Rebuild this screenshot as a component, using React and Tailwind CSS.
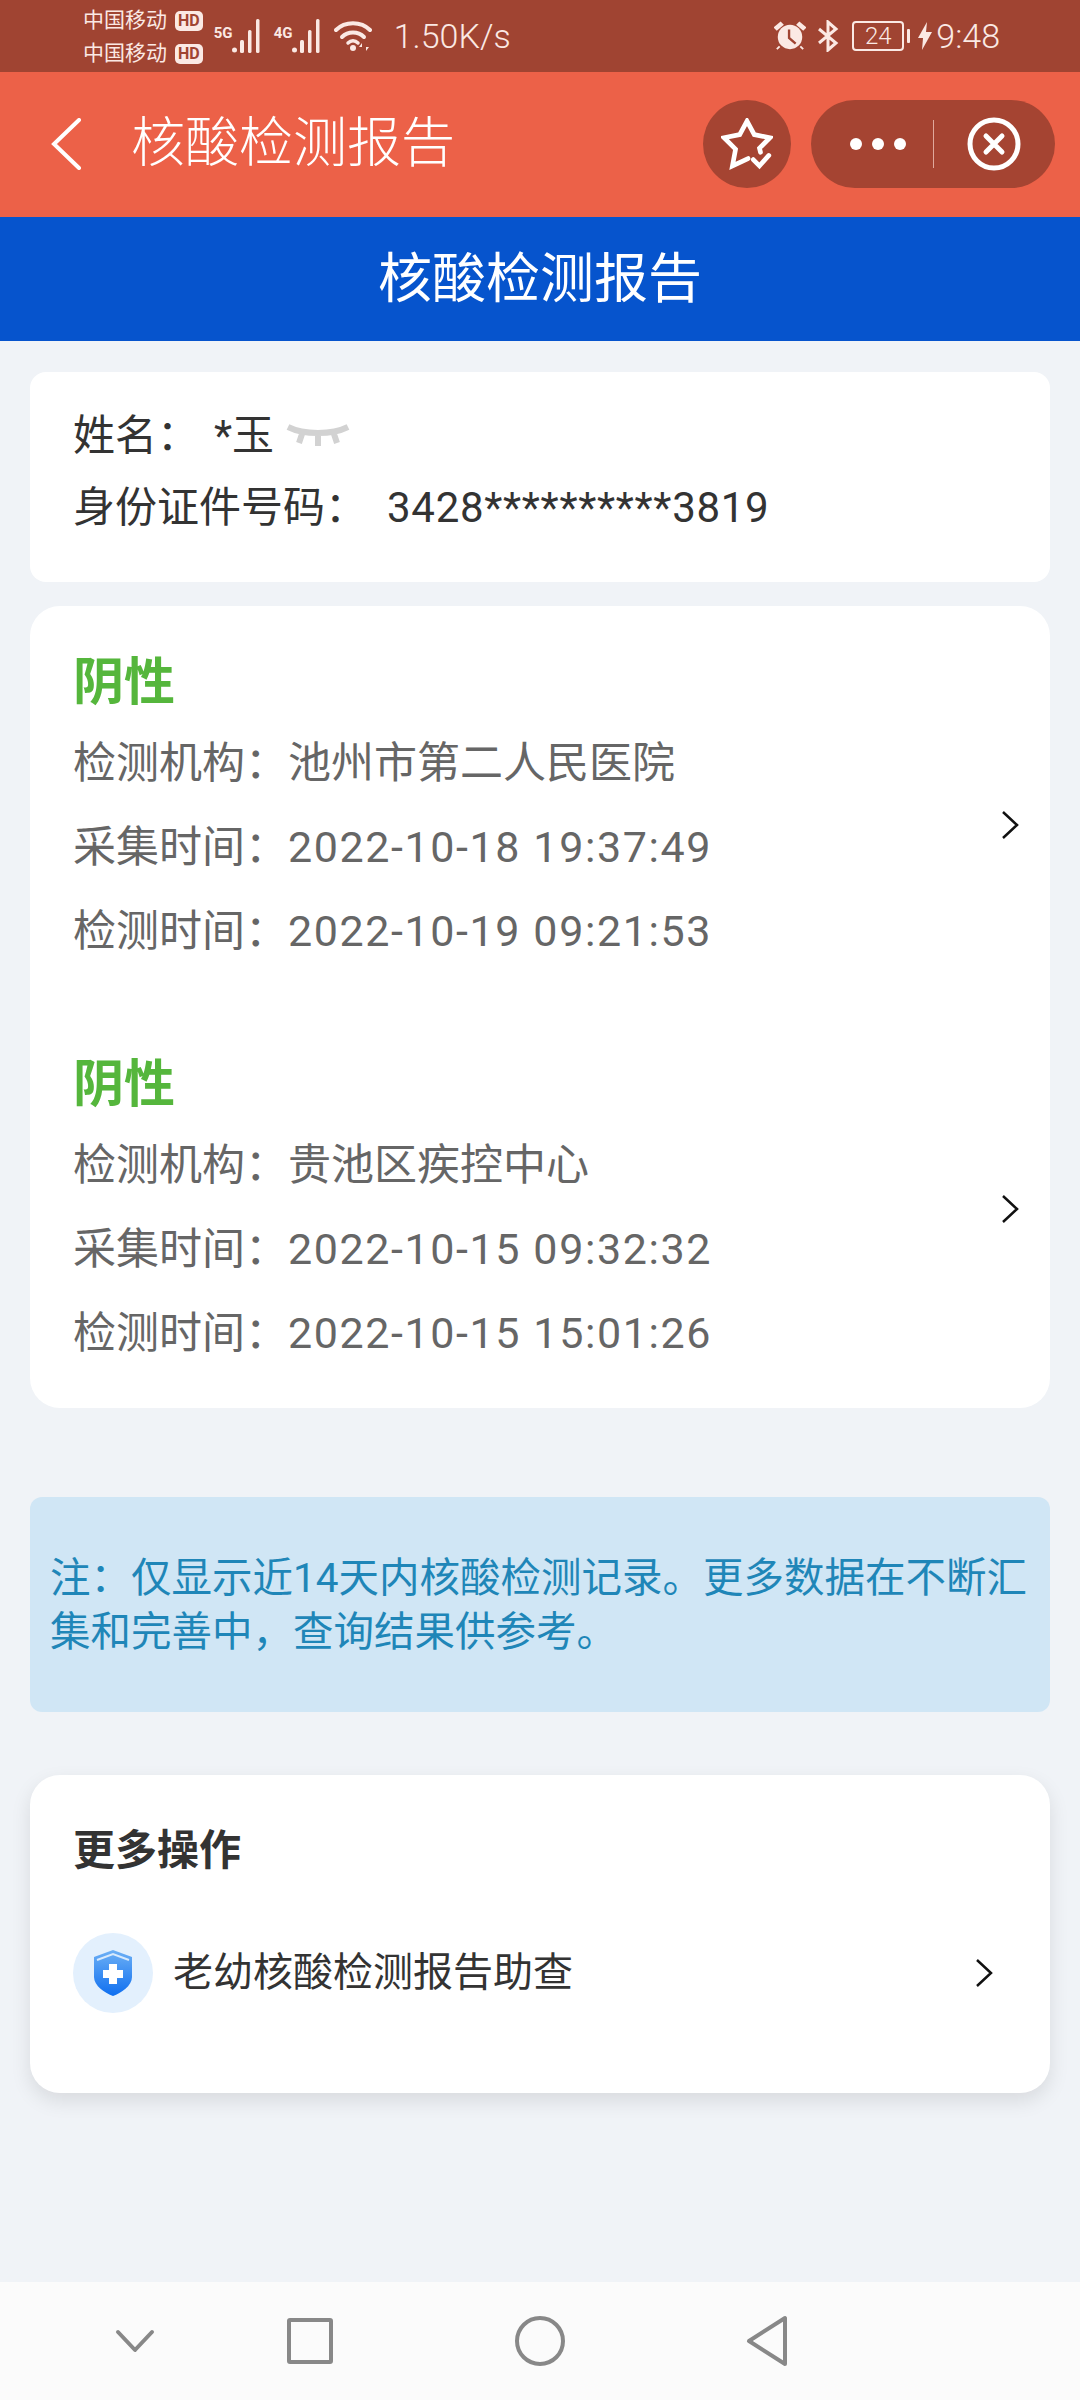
const font = { fontFamily: '"Roboto", "Noto Sans CJK SC", sans-serif' };

// full-width punctuation used in the labels
const COLON = "\uFF1A";
const COMMA = "\uFF0C";
const NOTE = `注${COLON}仅显示近14天内核酸检测记录。更多数据在不断汇集和完善中${COMMA}查询结果供参考。`;

function Signal({ label }) {
  return (
    <div className="flex items-end">
      <span className="mb-[12px] w-[18px] text-[15px] font-bold leading-none text-[#fbe9e4]">{label}</span>
      <svg width="32" height="34" viewBox="0 0 32 34" fill="#fbe9e4">
        <circle cx="2.5" cy="31" r="2.5" />
        <rect x="8" y="21" width="4" height="13" rx="1.5" />
        <rect x="16" y="11" width="3.5" height="23" rx="1.5" />
        <rect x="24" y="0" width="3.5" height="34" rx="1.5" />
      </svg>
    </div>
  );
}

function Hd() {
  return (
    <span className="ml-[8px] rounded-[5px] bg-[#fbe9e4] px-[3px] text-[16px] font-bold leading-[20px] text-[#a04432]">HD</span>
  );
}

function StatusBar() {
  return (
    <div className="flex h-[72px] shrink-0 items-center justify-between bg-[#a04432] pl-[83px] pr-[80px] text-[#fbe9e4]">
      <div className="flex items-center">
        <div className="flex flex-col pt-[2px] text-[21px] leading-[33px]">
          <div className="flex items-center">中国移动<Hd /></div>
          <div className="flex items-center">中国移动<Hd /></div>
        </div>
        <div className="ml-[11px] flex items-center gap-[10px]">
          <Signal label="5G" />
          <Signal label="4G" />
          <svg width="38" height="34" viewBox="0 0 38 34" fill="none" stroke="#fbe9e4" strokeLinecap="round">
            <path d="M2 11C11 2 27 2 36 11" strokeWidth="4" />
            <path d="M8 18C14 12 24 12 30 18" strokeWidth="4" />
            <path d="M14 24C17 21 21 21 24 24" strokeWidth="3.5" />
            <circle cx="19" cy="29" r="3" fill="#fbe9e4" stroke="none" />
            <path d="M28 24l-3 4h3zM32 32l3-4h-3z" fill="#fbe9e4" stroke="none" />
          </svg>
        </div>
        <span className="ml-[22px] text-[34px] font-light leading-none">1.50K/s</span>
      </div>
      <div className="flex items-center">
        <svg width="32" height="32" viewBox="0 0 34 32" fill="#fbe9e4">
          <circle cx="17" cy="17" r="13" />
          <path d="M1 7l6-5 2 2-6 5zM33 7l-6-5-2 2 6 5zM6 27l-3 3M28 27l3 3" stroke="#fbe9e4" strokeWidth="2" />
          <path d="M16 9v9l7 6" stroke="#a04432" strokeWidth="2.5" fill="none" />
        </svg>
        <svg className="ml-[11px]" width="22" height="32" viewBox="0 0 22 32" fill="none" stroke="#fbe9e4" strokeWidth="3">
          <path d="M2 9l17 14-8 7V2l8 7L2 23" />
        </svg>
        <div className="ml-[13px] flex h-[30px] w-[52px] items-center justify-center rounded-[4px] border-2 border-[#fbe9e4] text-[24px] font-light leading-none">24</div>
        <div className="ml-[3px] h-[14px] w-[3px] rounded-[1px] bg-[#fbe9e4]" />
        <svg className="ml-[8px]" width="14" height="28" viewBox="0 0 14 28" fill="#fbe9e4">
          <path d="M9 0L0 16h5l-1 12 10-18H8z" />
        </svg>
        <span className="ml-[4px] text-[34px] font-light leading-none">9:48</span>
      </div>
    </div>
  );
}

function Header() {
  return (
    <div className="flex h-[145px] shrink-0 items-center bg-[#ec6148] pb-[2px] pl-[50px] pr-[25px]">
      <svg width="32" height="52" viewBox="0 0 32 52" fill="none" stroke="#fff" strokeWidth="4" strokeLinecap="round">
        <path d="M29 2L4 26l25 24" />
      </svg>
      <span className="ml-[49px] text-[54px] font-light leading-none text-[#fff]">核酸检测报告</span>
      <div className="ml-auto flex items-center gap-[20px]">
        <div className="flex h-[88px] w-[88px] items-center justify-center rounded-full bg-[#a54432]">
          <svg width="52" height="52" viewBox="0 0 50 50" fill="none" stroke="#fff" strokeWidth="4.5" strokeLinejoin="miter" strokeLinecap="round">
            <path d="M26 39L11 46l3-16L3 19l15-3L25 3l7 13 15 3-10 10 1 4" />
            <path d="M31 40l6 6 9-10" />
          </svg>
        </div>
        <div className="flex h-[88px] w-[244px] items-center rounded-full bg-[#a54432] pl-[39px]">
          <div className="flex items-center gap-[10px]">
            <span className="h-[12px] w-[12px] rounded-full bg-[#fff]" />
            <span className="h-[12px] w-[12px] rounded-full bg-[#fff]" />
            <span className="h-[12px] w-[12px] rounded-full bg-[#fff]" />
          </div>
          <div className="ml-[27px] h-[48px] w-px bg-[#e0a99c]" />
          <svg className="ml-[33px]" width="54" height="54" viewBox="0 0 54 54" fill="none" stroke="#fff" strokeWidth="5">
            <circle cx="27" cy="27" r="24" />
            <path d="M19 19l16 16M35 19L19 35" strokeLinecap="round" />
          </svg>
        </div>
      </div>
    </div>
  );
}

function Chevron({ className }) {
  return (
    <svg className={className} width="20" height="30" viewBox="0 0 20 30" fill="none" stroke="#111" strokeWidth="2.5">
      <path d="M3 2l14 13L3 28" />
    </svg>
  );
}

function ReportRow({ org, collected, tested, chevronClass }) {
  return (
    <div className="flex items-center justify-between pr-[30px]">
      <div>
        <div className="text-[51px] font-bold leading-[66px] text-[#55b63c]">阴性</div>
        <div className="mt-[5px] flex flex-col text-[43px] leading-[84px] text-[#666]">
          <div>检测机构{COLON}<span>{org}</span></div>
          <div>采集时间{COLON}<span className="tracking-[1.6px]">{collected}</span></div>
          <div>检测时间{COLON}<span className="tracking-[1.6px]">{tested}</span></div>
        </div>
      </div>
      <Chevron className={chevronClass} />
    </div>
  );
}

function NavBar() {
  return (
    <div className="mt-auto flex h-[118px] shrink-0 items-center bg-[#fbfbfb] pl-[115px]">
      <svg width="40" height="26" viewBox="0 0 40 26" fill="none" stroke="#888" strokeWidth="4" strokeLinecap="round" strokeLinejoin="round">
        <path d="M3 4l17 18L37 4" />
      </svg>
      <div className="ml-[132px] h-[46px] w-[46px] rounded-[3px] border-4 border-[#888]" />
      <div className="ml-[182px] h-[50px] w-[50px] rounded-full border-4 border-[#888]" />
      <svg className="ml-[180px]" width="44" height="52" viewBox="0 0 44 52" fill="none" stroke="#888" strokeWidth="4" strokeLinejoin="round">
        <path d="M40 3v46L4 26z" />
      </svg>
    </div>
  );
}

export default function App() {
  return (
    <div style={font} className="flex h-[2400px] w-[1080px] flex-col overflow-hidden bg-[#f0f3f7]">
      <StatusBar />
      <Header />
      <div className="flex h-[124px] shrink-0 items-center justify-center bg-[#0654cd] pt-[2px] text-[54px] leading-none text-[#fff]">核酸检测报告</div>

      <div className="mx-[30px] mt-[31px] flex h-[210px] flex-col justify-start rounded-[16px] bg-[#fff] px-[43px] pt-[28px] text-[42px] leading-[72px] text-[#333]">
        <div className="flex items-center">
          <span>姓名{COLON}</span>
          <span className="ml-[15px]">*玉</span>
          <svg className="ml-[12px]" width="64" height="26" viewBox="0 0 64 26" fill="none" stroke="#d2d2d2" strokeWidth="6">
            <path d="M2 4c16 8 44 8 60 0M16 11l-3 9M32 13v10M48 11l3 9" />
          </svg>
        </div>
        <div>
          <span>身份证件号码{COLON}</span>
          <span className="ml-[20px] tracking-[0.7px]">3428**********3819</span>
        </div>
      </div>

      <div className="mx-[30px] mt-[24px] flex h-[802px] flex-col rounded-[30px] bg-[#fff] pl-[43px] pt-[44px]">
        <ReportRow chevronClass="translate-y-[13px]" org="池州市第二人民医院" collected="2022-10-18 19:37:49" tested="2022-10-19 09:21:53" />
        <div className="mt-[79px]">
          <ReportRow chevronClass="-translate-y-[5px]" org="贵池区疾控中心" collected="2022-10-15 09:32:32" tested="2022-10-15 15:01:26" />
        </div>
      </div>

      <div className="mx-[30px] mt-[89px] flex h-[215px] items-center rounded-[12px] bg-[#d0e6f5] px-[20px] text-[40.5px] leading-[54px] text-[#1f86b8]">
        <p>{NOTE}</p>
      </div>

      <div className="mx-[30px] mt-[63px] flex h-[318px] flex-col rounded-[30px] bg-[#fff] px-[43px] pt-[48px] shadow-[0_8px_20px_rgba(0,0,0,0.1)]">
        <div className="text-[42px] font-bold leading-[56px] text-[#333]">更多操作</div>
        <div className="mt-[54px] flex items-center">
          <div className="flex h-[80px] w-[80px] items-center justify-center rounded-full bg-[#e3f0fd]">
            <svg width="40" height="46" viewBox="0 0 40 46">
              <defs>
                <linearGradient id="shield" x1="0" y1="0" x2="0" y2="1">
                  <stop offset="0" stopColor="#6db0f5" />
                  <stop offset="1" stopColor="#0f6ff0" />
                </linearGradient>
              </defs>
              <path d="M20 0l19 7v20c0 9-11 16-19 19C12 43 1 36 1 27V7z" fill="url(#shield)" />
              <path d="M4 10l16-6 16 6" fill="none" stroke="#d8eafc" strokeWidth="2" />
              <path d="M20 14v20M10 24h20" stroke="#fff" strokeWidth="8" />
            </svg>
          </div>
          <span className="ml-[20px] text-[40px] leading-none text-[#333]">老幼核酸检测报告助查</span>
          <Chevron className="ml-auto mr-[13px]" />
        </div>
      </div>

      <NavBar />
    </div>
  );
}
